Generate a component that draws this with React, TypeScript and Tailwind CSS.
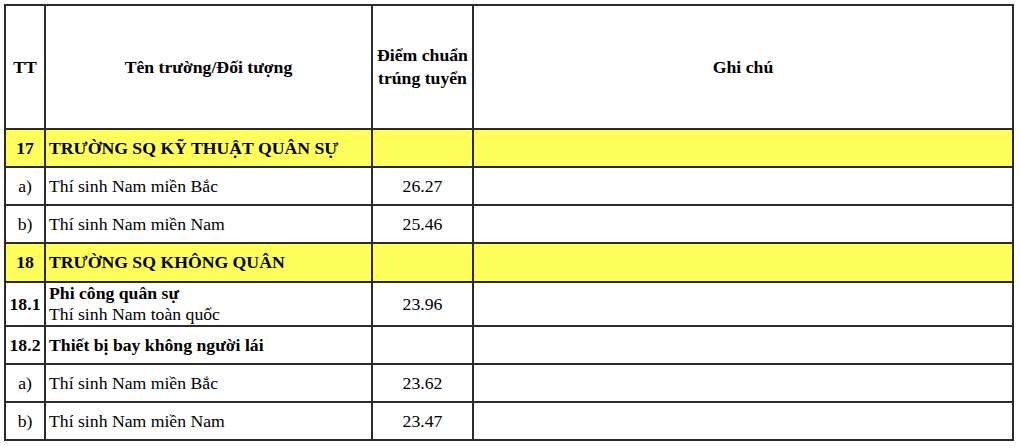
import React from "react";

type Row = {
  tt: string;
  name: React.ReactNode;
  score?: string;
  h: string;
  hl?: boolean;
  ttBold?: boolean;
};

const rows: Row[] = [
  { tt: "17", name: <b>TRƯỜNG SQ KỸ THUẬT QUÂN SỰ</b>, h: "h-[38px]", hl: true, ttBold: true },
  { tt: "a)", name: "Thí sinh Nam miền Bắc", score: "26.27", h: "h-[38px]" },
  { tt: "b)", name: "Thí sinh Nam miền Nam", score: "25.46", h: "h-[38px]" },
  { tt: "18", name: <b>TRƯỜNG SQ KHÔNG QUÂN</b>, h: "h-[39px]", hl: true, ttBold: true },
  {
    tt: "18.1",
    name: (
      <div className="leading-[21px]">
        <b>Phi công quân sự</b>
        <br />
        Thí sinh Nam toàn quốc
      </div>
    ),
    score: "23.96",
    h: "h-[43px]",
    ttBold: true,
  },
  { tt: "18.2", name: <b>Thiết bị bay không người lái</b>, h: "h-[38px]", ttBold: true },
  { tt: "a)", name: "Thí sinh Nam miền Bắc", score: "23.62", h: "h-[38px]" },
  { tt: "b)", name: "Thí sinh Nam miền Nam", score: "23.47", h: "h-[38px]" },
];

export default function App() {
  const cell = "border-2 border-[#2b2b2b] p-0";
  return (
    <div className="h-[448px] w-[1020px] bg-white pl-[4px] pt-[4px] font-['Liberation_Serif','Times_New_Roman',serif] text-[17.7px] text-black">
      <table className="table-fixed border-collapse">
        <colgroup>
          <col className="w-[40px]" />
          <col className="w-[327px]" />
          <col className="w-[101px]" />
          <col className="w-[540px]" />
        </colgroup>
        <thead>
          <tr className="h-[124px]">
            <th className={`${cell} text-center font-bold`}>TT</th>
            <th className={`${cell} text-center font-bold`}>Tên trường/Đối tượng</th>
            <th className={`${cell} text-center font-bold leading-[23px]`}>
              Điểm chuẩn
              <br />
              trúng tuyển
            </th>
            <th className={`${cell} text-center font-bold`}>Ghi chú</th>
          </tr>
        </thead>
        <tbody>
          {rows.map((r, i) => (
            <tr key={i} className={`${r.h} ${r.hl ? "bg-[#ffff5c]" : ""}`}>
              <td className={`${cell} text-center ${r.ttBold ? "font-bold" : ""}`}>{r.tt}</td>
              <td className={`${cell} pl-[3px] text-left`}>{r.name}</td>
              <td className={`${cell} text-center`}>{r.score}</td>
              <td className={cell}></td>
            </tr>
          ))}
        </tbody>
      </table>
    </div>
  );
}
